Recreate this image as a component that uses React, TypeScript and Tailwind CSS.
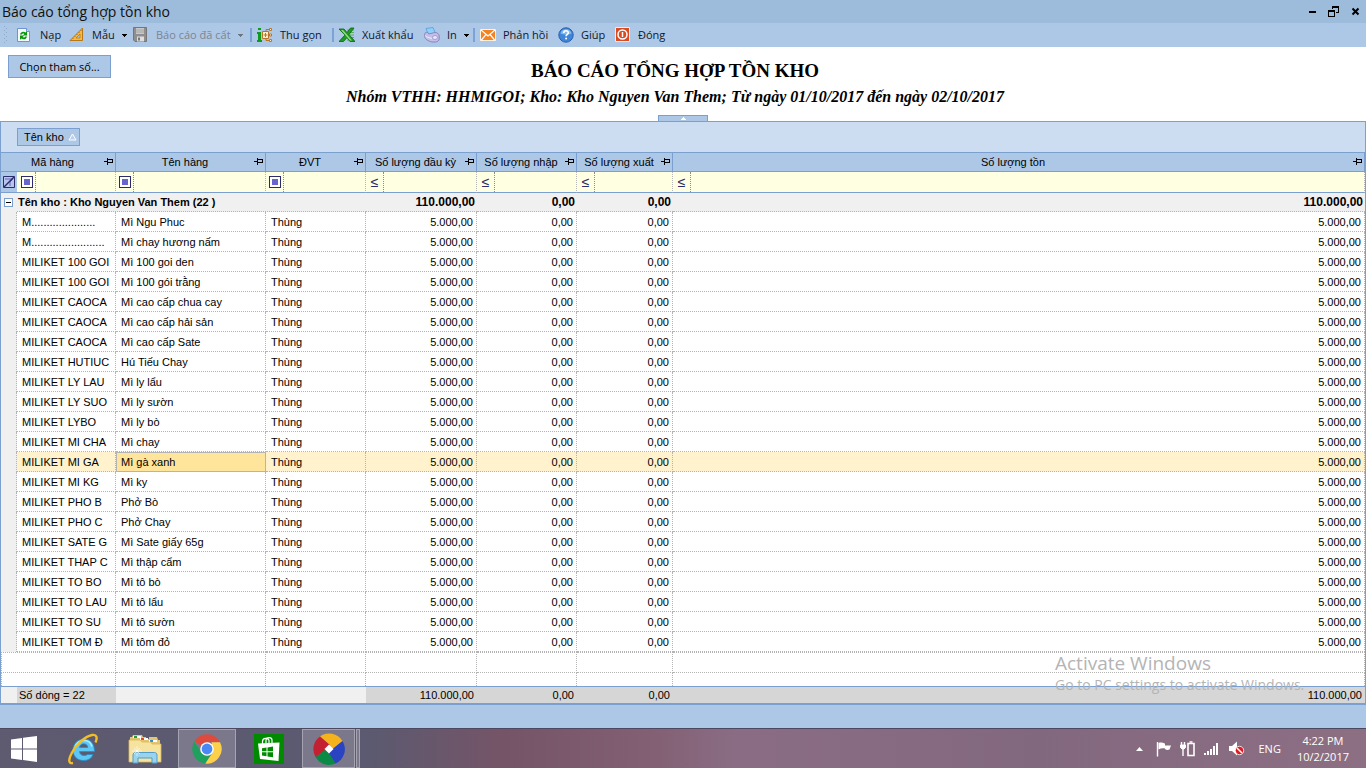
import React from 'react';

type Row = { code: string; name: string };

const rows: Row[] = [
  { code: 'M.....................', name: 'Mì Ngu Phuc' },
  { code: 'M........................', name: 'Mì chay hương nấm' },
  { code: 'MILIKET 100 GOI', name: 'Mì 100 goi den' },
  { code: 'MILIKET 100 GOI', name: 'Mì 100 gói trằng' },
  { code: 'MILIKET CAOCA', name: 'Mì cao cấp chua cay' },
  { code: 'MILIKET CAOCA', name: 'Mì cao cấp hải sản' },
  { code: 'MILIKET CAOCA', name: 'Mì cao cấp Sate' },
  { code: 'MILIKET HUTIUC', name: 'Hú Tiếu Chay' },
  { code: 'MILIKET LY LAU', name: 'Mì ly lẩu' },
  { code: 'MILIKET LY SUO', name: 'Mì ly sườn' },
  { code: 'MILIKET LYBO', name: 'Mì ly bò' },
  { code: 'MILIKET MI CHA', name: 'Mì chay' },
  { code: 'MILIKET MI GA', name: 'Mì gà xanh' },
  { code: 'MILIKET MI KG', name: 'Mì ky' },
  { code: 'MILIKET PHO B', name: 'Phở Bò' },
  { code: 'MILIKET PHO C', name: 'Phở Chay' },
  { code: 'MILIKET SATE G', name: 'Mì Sate giấy 65g' },
  { code: 'MILIKET THAP C', name: 'Mì thập cẩm' },
  { code: 'MILIKET TO BO', name: 'Mì tô bò' },
  { code: 'MILIKET TO LAU', name: 'Mì tô lẩu' },
  { code: 'MILIKET TO SU', name: 'Mì tô sườn' },
  { code: 'MILIKET TOM Đ', name: 'Mì tôm đỏ' },
];

const SELECTED = 12;

const headers = ['Mã hàng', 'Tên hàng', 'ĐVT', 'Số lượng đầu kỳ', 'Số lượng nhập', 'Số lượng xuất', 'Số lượng tồn'];

const Pin = () => (
  <svg width="10" height="8" viewBox="0 0 10 8" className="mr-px shrink-0" shapeRendering="crispEdges">
    <path d="M0 3h3v1H0zM3 0h1v7H3zM4 1h5v1H4zM8 2h1v2H8zM4 4h5v1H4z" fill="#000" />
  </svg>
);

const Caret = ({ className }: { className: string }) => (
  <svg width="5" height="3" viewBox="0 0 5 3" className={className} shapeRendering="crispEdges">
    <path d="M0 0h5v1H0zM1 1h3v1H1zM2 2h1v1H2z" fill="currentColor" />
  </svg>
);

const Separator = () => <span className="h-[14px] w-[2px] shrink-0 bg-[#7ba2d4]" />;

/* Toolbar icons */
const RefreshIcon = () => (
  <svg width="16" height="16" viewBox="0 0 16 16">
    <path d="M.5 1.500h9l3 3v10H.5z" fill="#f4f9ff" stroke="#6f94cf" />
    <path d="M9.500 1.500v3h3" fill="#c8dcf5" stroke="#6f94cf" />
    <path d="M3 7.500C3.500 4.500 7 4 8.500 5.500L10 4.300V8.500H5.800L7.300 7c-1-.8-2-.5-2.500.5z" fill="#0c980c" />
    <path d="M10 9.500c-.5 3-4 3.500-5.500 2L3 12.700V8.500h4.200L5.700 10c1 .8 2 .5 2.500-.5z" fill="#0c980c" />
  </svg>
);

const SquareIcon = () => (
  <svg width="16" height="16" viewBox="0 0 16 16">
    <path d="M13.500 1v12.500H1z" fill="#f5b942" stroke="#b87818" />
    <path d="M11 7v4H7z" fill="#adc7e7" stroke="#b87818" strokeWidth=".8" />
    <path d="M3.500 11l1 1M5.500 9l1 1M7.500 7l1 1M9.500 5l1 1M11.500 3l1 1" stroke="#9a6210" strokeWidth=".8" />
  </svg>
);

const SaveIcon = () => (
  <svg width="16" height="16" viewBox="0 0 16 16">
    <path d="M.5.500h13v14H2l-1.500-1.500z" fill="#8f8f8f" stroke="#767676" />
    <path d="M3 1h8v6H3z" fill="#c9c9c9" />
    <path d="M3 3h8M3 5h8" stroke="#a6a6a6" />
    <path d="M4 9.500h7v5H4z" fill="#dedede" />
    <path d="M5 10.500h2v3H5z" fill="#777" />
  </svg>
);

const CollapseIcon = () => (
  <svg width="16" height="16" viewBox="0 0 16 16" fill="none">
    <path d="M1 1h3v2H1zM0 5h4v8h1v2H0v-2h1V7H0z" fill="#0f9a1e" />
    <path d="M5.500 4.500h6v7h-6z" fill="#fff0c8" stroke="#b8742a" />
    <path d="M8.500 6v4M6.500 8h4M11.500 8h1M9 4V2.500h3M9 12v1.500h3" stroke="#b8742a" />
    <path d="M12.500 1.500h2v2h-2zM12.500 7h2v2h-2zM12.500 12.500h2v2h-2z" fill="#fff0c8" stroke="#b8742a" />
  </svg>
);

const ExcelIcon = () => (
  <svg width="16" height="16" viewBox="0 0 16 16">
    <path d="M8 3h7M8 5.500h7M8 8h7M8 10.500h7M8 13h7" stroke="#5cae5c" />
    <path d="M0 2h5l3 3.500L11.500 1H15l-5 6.500 6 7h-5l-3-4-3.500 4H0l6-6.500z" fill="#1f9a25" stroke="#0b6412" strokeWidth=".8" />
    <path d="M2 3h2l9 10.500h-2z" fill="#8ede78" />
  </svg>
);

const PrinterIcon = () => (
  <svg width="16" height="16" viewBox="0 0 16 16">
    <path d="M2 1.500l7-1 2.500 6-7 1.500z" fill="#8fd0fa" stroke="#5a9ddb" strokeWidth=".8" />
    <path d="M.8 7c0-1.500 1.500-2 3-1.500l1 1.500 6-1.500c2.500 0 4.400 1.500 4.400 3.500v3c0 1.500-2 3-4 3H8C4 14 .8 12 .8 10z" fill="#c4bfe8" stroke="#7c76b4" strokeWidth=".8" />
    <path d="M1 8.500c2 2 4 2 7 3" stroke="#eeecff" fill="none" />
    <ellipse cx="11" cy="10.500" rx="2.500" ry="2" fill="#e9e6fb" stroke="#8e88c4" strokeWidth=".7" />
  </svg>
);

const MailIcon = () => (
  <svg width="16" height="16" viewBox="0 0 16 16">
    <path d="M.5 2.500h15v11H.5z" fill="#f58220" stroke="#fff0dc" />
    <path d="M1 3l7 6 7-6M1 13.500l5-6M15 13.500l-5-6" fill="none" stroke="#fff" strokeWidth="1.200" />
  </svg>
);

const HelpIcon = () => (
  <svg width="16" height="16" viewBox="0 0 16 16">
    <circle cx="8" cy="8" r="7.200" fill="#3f86d8" stroke="#2a5ea8" />
    <path d="M2.500 6.500a5.700 5.700 0 0 1 11 0c-3 1.500-8 1.500-11 0z" fill="#84b8f0" />
    <path d="M5.800 6c0-3 4.600-2.800 4.500-.3 0 1.600-2.200 1.700-2.200 3.500" fill="none" stroke="#fff" strokeWidth="1.600" />
    <circle cx="8.100" cy="11.600" r="1" fill="#fff" />
  </svg>
);

const CloseIcon = () => (
  <svg width="16" height="16" viewBox="0 0 16 16">
    <path d="M.5.500h14v14H.5z" fill="#dc4a20" stroke="#fbe8dc" />
    <circle cx="7.500" cy="7.500" r="4.500" fill="none" stroke="#fff" strokeWidth="1.500" />
    <path d="M7.500 5v5" stroke="#fff" strokeWidth="1.500" />
  </svg>
);

/* Taskbar icons */
const WindowsIcon = () => (
  <svg width="26" height="26" viewBox="0 0 26 26" fill="#fff">
    <path d="M0 3.600L11 2v10.500H0zM12 1.800L26 0v12.500H12zM0 13.500h11V24L0 22.400zM12 13.500h14V26l-14-1.900z" />
  </svg>
);

const IeIcon = () => (
  <svg width="32" height="32" viewBox="0 0 32 32" fill="none">
    <path d="M26 21.500c-1.500 4-5 6-9.500 6-6.500 0-10.500-4.500-10.500-10.500S10.500 6 17 6c6.500 0 10.500 4.500 10.500 12.500H12.500c.3 2.700 2 4 4.500 4 1.500 0 2.700-.3 3.500-1zM12.500 14.500h8.300c-.3-2.500-1.800-3.700-4-3.700s-3.800 1.200-4.300 3.700z" fill="#5cc8f5" stroke="#1f8fd0" strokeWidth=".8" fillRule="evenodd" />
    <path d="M8 15c.5-4.500 4.500-7.500 9-7.500 4 0 7 2.500 8 6" stroke="#b8ecfd" strokeWidth="1.600" />
    <path d="M6 30C1 31 1.500 26 4.500 20.500 8.500 12 18 3.500 25 2c5-1 5.500 3 3.500 7.500" stroke="#f3bf23" strokeWidth="2.400" />
  </svg>
);

const ExplorerIcon = () => (
  <svg width="34" height="30" viewBox="0 0 34 30">
    <path d="M2 3h2l1-2h9l1 2h3v2h3V3h8l1 3h2v22H2z" fill="#e6c66c" />
    <path d="M5 2h8v2H5z" fill="#fff" /><path d="M6 2h3v2H6z" fill="#1ca040" />
    <path d="M12 4h8v2h-8z" fill="#fff" /><path d="M13 4h3v2h-3z" fill="#e04828" />
    <path d="M21 6h8v2h-8z" fill="#fff" /><path d="M22 6h3v2h-3z" fill="#2a8fd8" />
    <path d="M1 6h11l2 2h9l1 2h9v18H1z" fill="#f7e3a0" stroke="#d9b656" strokeWidth=".8" />
    <path d="M5 29v-8c0-1.500 1-2.500 2.500-2.500h19c1.500 0 2.500 1 2.500 2.500v8h-5v-5H10v5z" fill="#9bd3ee" stroke="#4f9dc8" />
    <path d="M9 12v10M4 17h10M6 14l6 6M12 14l-6 6" stroke="#fff" strokeWidth=".6" />
  </svg>
);

const ChromeIcon = () => (
  <svg width="30" height="30" viewBox="0 0 30 30">
    <path d="M15 15L2.300 7.500A14.700 14.700 0 0 1 28 8.300L15 8.300z" fill="#dd4b3e" />
    <path d="M2.300 7.500a14.700 14.700 0 0 0 11 22.100L20.500 18 15 15 9 18z" fill="#1fa15d" />
    <path d="M28 8.300a14.700 14.700 0 0 1-14.700 21.300L21 18l-1.500-9.700z" fill="#fdd04a" />
    <circle cx="15" cy="15" r="6.800" fill="#fff" />
    <circle cx="15" cy="15" r="5.400" fill="#4a89f3" />
  </svg>
);

const StoreIcon = () => (
  <svg width="30" height="30" viewBox="0 0 30 30">
    <path d="M0 0h30v30H0z" fill="#008a00" />
    <path d="M4 9.500l21.500-1L24.500 27 6 25z" fill="#fff" />
    <path d="M8.500 10V7.500c0-4 6-4 6.500-1V9M12 9V6c.5-3.500 6-3 6 0v3" fill="none" stroke="#fff" strokeWidth="1.200" />
    <path d="M8 14.200l4.500-.7v3.800H8zM13.500 13.400l5.500-.8v4.700h-5.500zM8 18.300h4.500v3.900L8 21.600zM13.500 18.300H19v4.900l-5.500-.8z" fill="#008a00" />
  </svg>
);

const BallIcon = () => (
  <svg width="32" height="32" viewBox="0 0 32 32">
    <path d="M7 3.500A15.500 15.500 0 0 1 29.500 8L20 17l-4-5z" fill="#f4b21d" />
    <path d="M29.500 8a15.500 15.500 0 0 1-7 22.500L13.500 20 20 15.500z" fill="#2a43c0" />
    <path d="M22.500 30.500A15.500 15.500 0 0 1 2.500 24l9.500-8 4 4z" fill="#0a8a45" />
    <path d="M2.500 24A15.500 15.500 0 0 1 7 3.500L17 12l-5 5z" fill="#c32032" />
    <path d="M16 11.500l4.500 4.500-4.500 4.500-4.500-4.500z" fill="#fff" />
  </svg>
);

/* Tray icons */
const FlagIcon = () => (
  <svg width="16" height="16" viewBox="0 0 16 16">
    <path d="M1.500 1v14.500" stroke="#fff" strokeWidth="1.400" />
    <path d="M2.500 2C5 1 7 2 9 2.500V4.500h6l-1.500 4c-2 .8-3.500.3-4.500-.5V7.500C6.500 7 4.500 7.500 2.500 8.500z" fill="#fff" />
  </svg>
);

const BatteryIcon = () => (
  <svg width="16" height="16" viewBox="0 0 16 16" fill="none" stroke="#fff">
    <path d="M8 2.500h6v12H8z" strokeWidth="1.600" />
    <path d="M9.500 1h3M1.500 1v3M4.500 1v3M3 7v8" strokeWidth="1.400" />
    <path d="M.5 4h5v2.500L4 8H2L.5 6.500z" fill="#fff" />
  </svg>
);

const SignalIcon = () => (
  <svg width="16" height="12" viewBox="0 0 16 12" fill="#fff">
    <path d="M0 10h2v2H0zM3 8h2v4H3zM6 6h2v6H6zM9 3h2v9H9zM12 0h2v12h-2z" />
  </svg>
);

const SpeakerIcon = () => (
  <svg width="17" height="15" viewBox="0 0 17 15">
    <path d="M1 5h3l5-4.500v14L4 10H1z" fill="#fff" />
    <circle cx="11.500" cy="9.500" r="4.200" fill="#e21b22" stroke="#fff" strokeWidth=".8" />
    <path d="M9 7l5 5" stroke="#fff" strokeWidth="1.500" />
  </svg>
);

const FilterSquare = () => (
  <svg width="12" height="12" viewBox="0 0 12 12" shapeRendering="crispEdges">
    <path d="M.5.500h11v11H.5z" fill="#fff" stroke="#2c2c6c" />
    <path d="M3 3h6v6H3z" fill="#6666cc" />
  </svg>
);

const tools = [
  { label: 'Nạp', icon: <RefreshIcon />, width: 'w-[52px]' },
  { label: 'Mẫu', icon: <SquareIcon />, width: 'w-16', menu: true },
  { label: 'Báo cáo đã cất', icon: <SaveIcon />, width: 'w-[117px]', menu: true, disabled: true, sep: true },
  { label: 'Thu gọn', icon: <CollapseIcon />, width: 'w-[75px]', sep: true },
  { label: 'Xuất khẩu', icon: <ExcelIcon />, width: 'w-[85px]' },
  { label: 'In', icon: <PrinterIcon />, width: 'w-[49px]', menu: true, sep: true },
  { label: 'Phản hồi', icon: <MailIcon />, width: 'w-[78px]' },
  { label: 'Giúp', icon: <HelpIcon />, width: 'w-[57px]' },
  { label: 'Đóng', icon: <CloseIcon />, width: 'w-16' },
];

const cell = 'overflow-hidden whitespace-nowrap border-b border-r border-dotted border-[#b4b4b4] p-0';
const foot = 'h-[17px] border-t border-[#7b9fce] p-0';

const App: React.FC = () => {
  return (
    <div className="flex min-h-screen flex-col bg-[#adc7e7] font-['Liberation_Sans',Arial,sans-serif] text-[11px] leading-4 text-black">
      {/* Title bar */}
      <header className="flex h-[23px] items-center justify-between bg-[#9dbbdb] pl-[2px] pr-[6px]">
        <h1 className="font-['Open_Sans',sans-serif] text-[14px] leading-5 text-[#101010]">Báo cáo tổng hợp tồn kho</h1>
        <div className="flex items-center gap-[11px]">
          <button aria-label="Minimize">
            <svg width="8" height="12" viewBox="0 0 8 12"><path d="M0 5h7v2H0z" /></svg>
          </button>
          <button aria-label="Restore">
            <svg width="12" height="12" viewBox="0 0 12 12" fill="none" stroke="#000" shapeRendering="crispEdges">
              <path d="M4.500 3V1.500h6v5H8M.5 5.500h6v5h-6z" />
              <path d="M4 1h7M0 5h7" strokeWidth="2" />
            </svg>
          </button>
          <button aria-label="Close">
            <svg width="9" height="12" viewBox="0 0 9 12"><path d="M1.500 2.500l6 6M7.500 2.500l-6 6" stroke="#000" strokeWidth="2" /></svg>
          </button>
        </div>
      </header>

      {/* Toolbar */}
      <nav className="flex h-6 items-center pl-1 font-['Open_Sans',sans-serif]">
        <svg width="6" height="20" viewBox="0 0 6 20" fill="#8ea9cb" className="mr-[7px]" shapeRendering="crispEdges">
          <path d="M0 1h1v1H0zM0 5h1v1H0zM0 9h1v1H0zM0 13h1v1H0zM0 17h1v1H0zM2 3h1v1H2zM2 7h1v1H2zM2 11h1v1H2zM2 15h1v1H2z" />
        </svg>
        {tools.map((t) => (
          <React.Fragment key={t.label}>
            <button
              disabled={t.disabled}
              className={`flex h-full shrink-0 items-center gap-[7px] whitespace-nowrap text-[11px] ${t.width} ${t.disabled ? 'text-[#7d8590]' : 'text-[#101828]'}`}
            >
              {t.icon}
              <span>{t.label}</span>
              {t.menu && <Caret className={t.disabled ? 'text-[#6c7480]' : 'text-black'} />}
            </button>
            {t.sep && <span className="flex w-[7px] shrink-0"><Separator /></span>}
          </React.Fragment>
        ))}
      </nav>

      {/* Report heading */}
      <section className="grid bg-white">
        <div className="col-start-1 row-start-1 px-2 pt-2">
          <button className="h-[23px] w-[103px] border border-[#7b9fce] bg-[#adc7e7] font-['Open_Sans',sans-serif]">Chọn tham số...</button>
        </div>
        <div className="col-start-1 row-start-1 mx-auto pr-4 pt-3 text-center font-['Liberation_Serif','Times_New_Roman',serif]">
          <h2 className="text-[19px] font-bold leading-6">BÁO CÁO TỔNG HỢP TỒN KHO</h2>
          <p className="pt-1 text-[16px] font-bold italic leading-5">
            Nhóm VTHH: HHMIGOI; Kho: Kho Nguyen Van Them; Từ ngày 01/10/2017 đến ngày 02/10/2017
          </p>
        </div>
        <button aria-label="Thu gọn tham số" className="col-start-1 row-start-2 mx-auto mt-2 flex h-[6px] w-[50px] items-center justify-center border border-b-0 border-[#7b9fce] bg-[#adc7e7]">
          <svg width="5" height="3" viewBox="0 0 5 3" fill="#fff"><path d="M2 0h1v1H2zM1 1h3v1H1zM0 2h5v1H0z" /></svg>
        </button>
      </section>

      {/* Data grid */}
      <main className="relative border-b-2 border-l border-r border-t border-[#7b9fce] bg-white">
        <div className="flex h-[30px] items-center bg-[#ccdcf1] pl-4">
          <button className="flex h-[18px] w-[63px] items-center gap-1 border border-[#7b9fce] bg-[#adc7e7] pl-[6px]">
            Tên kho
            <svg width="9" height="8" viewBox="0 0 9 8"><path d="M4.500 1L8 7H1z" fill="#bccfe6" stroke="#fff" /></svg>
          </button>
        </div>

        <table className="w-full table-fixed border-separate border-spacing-0">
          <colgroup>
            <col className="w-4" />
            <col className="w-[99px]" />
            <col className="w-[150px]" />
            <col className="w-[100px]" />
            <col className="w-[111px]" />
            <col className="w-[100px]" />
            <col className="w-[96px]" />
            <col />
          </colgroup>
          <thead>
            <tr>
              {headers.map((h, i) => (
                <th key={h} colSpan={i === 0 ? 2 : 1} className="h-5 border-b border-r border-t border-[#7b9fce] bg-[#adc7e7] p-0 font-normal">
                  <div className="flex items-center">
                    <span className="flex-1 whitespace-nowrap">{h}</span>
                    <Pin />
                  </div>
                </th>
              ))}
            </tr>
            <tr>
              <td className="h-[21px] border-b border-[#7b9fce] bg-[#adc7e7] p-0">
                <button aria-label="Xóa bộ lọc" className="flex pl-[2px]">
                  <svg width="12" height="12" viewBox="0 0 12 12" fill="none" stroke="#2c2c6c">
                    <path d="M.5.500h11v11H.5z" fill="#b8c6ee" />
                    <path d="M2 3h8L7 6v4" stroke="#5a68c0" />
                    <path d="M1 11L11 1" strokeWidth="1.500" />
                  </svg>
                </button>
              </td>
              {headers.map((h, i) => (
                <td key={h} className="h-[21px] border-b border-r border-b-[#7b9fce] border-r-[#b4b4b4] bg-[#ffffe1] p-0 [border-right-style:dotted]">
                  <div className="flex h-5">
                    <button aria-label={`Điều kiện lọc ${h}`} className={`flex h-5 shrink-0 items-center border-r border-dotted border-[#8c8c8c] ${i === 0 ? 'w-[19px] pl-1' : 'w-[18px] justify-center'}`}>
                      {i < 3 ? <FilterSquare /> : <span className="text-[14px] text-[#2c2c6c]">≤</span>}
                    </button>
                    <input aria-label={`Lọc ${h}`} className="w-full min-w-0 bg-transparent px-1 outline-none" />
                  </div>
                </td>
              ))}
            </tr>
          </thead>
          <tbody>
            <tr className="bg-[#f0f0f0] text-[12px] font-bold">
              <td className="h-[19px] p-0">
                <button aria-label="Thu gọn nhóm" className="ml-[3px] flex h-[9px] w-[9px] items-center justify-center border border-[#7b9fce] bg-white">
                  <span className="h-px w-[5px] bg-black" />
                </button>
              </td>
              <td colSpan={3} className="h-[19px] border-b border-dotted border-[#b4b4b4] p-0 pl-px text-[11px]">Tên kho : Kho Nguyen Van Them (22 )</td>
              {['110.000,00', '0,00', '0,00', '110.000,00'].map((v, i) => (
                <td key={i} className="h-[19px] border-b border-dotted border-[#b4b4b4] p-0 pr-[2px] text-right">{v}</td>
              ))}
            </tr>
            {rows.map((r, i) => (
              <tr key={i} className={i === SELECTED ? 'bg-[#fff2cc]' : 'bg-white'}>
                <td className="h-5 border-r border-dotted border-[#b4b4b4] bg-[#f0f0f0] p-0" />
                <td className={`${cell} h-5 pl-[5px]`}>{r.code}</td>
                <td className={`${cell} h-5 pl-[5px] ${i === SELECTED ? 'bg-[#ffe49c] outline outline-1 -outline-offset-1 outline-[#b4b4b4]' : ''}`}>{r.name}</td>
                <td className={`${cell} h-5 pl-[5px]`}>Thùng</td>
                <td className={`${cell} h-5 pr-[3px] text-right`}>5.000,00</td>
                <td className={`${cell} h-5 pr-[3px] text-right`}>0,00</td>
                <td className={`${cell} h-5 pr-[3px] text-right`}>0,00</td>
                <td className={`${cell} h-5 pr-[3px] text-right`}>5.000,00</td>
              </tr>
            ))}
            <tr>
              {headers.map((h, i) => (
                <td key={h} colSpan={i === 0 ? 2 : 1} className={`${cell} h-[21px] ${i === 0 ? 'border-l' : ''} border-t`} />
              ))}
            </tr>
            <tr>
              {headers.map((h, i) => (
                <td key={h} colSpan={i === 0 ? 2 : 1} className={`h-[13px] border-r border-dotted border-[#b4b4b4] p-0 ${i === 0 ? 'border-l' : ''}`} />
              ))}
            </tr>
          </tbody>
          <tfoot>
            <tr className="bg-[#f0f0f0]">
              <td className={foot} />
              <td className={`${foot} bg-[#d6d6d6] pl-[2px]`}>Số dòng = 22</td>
              <td className={foot} />
              <td className={foot} />
              {['110.000,00', '0,00', '0,00', '110.000,00'].map((v, i) => (
                <td key={i} className={`${foot} bg-[#d6d6d6] pr-[3px] text-right`}>{v}</td>
              ))}
            </tr>
          </tfoot>
        </table>

        {/* Activation watermark */}
        <div className="pointer-events-none absolute bottom-2 right-0 w-[310px] whitespace-nowrap font-['Open_Sans',sans-serif] text-[#b4b4b4]">
          <p className="text-[19px] leading-6">Activate Windows</p>
          <p className="text-[14px] leading-5">Go to PC settings to activate Windows.</p>
        </div>
      </main>

      <div className="min-h-[23px] flex-1" />

      {/* Taskbar */}
      <footer className="flex h-10 items-center justify-between border-t border-[#4c4860] bg-[linear-gradient(90deg,#5e5a70_0%,#5b5a70_27%,#765467_37%,#836074_48%,#8a6d84_54%,#82687f_76%,#8d6f83_100%)] font-['Open_Sans',sans-serif] text-white">
        <div className="flex h-full items-center gap-1">
          <button aria-label="Start" className="flex w-[50px] pl-[11px]"><WindowsIcon /></button>
          <button aria-label="Internet Explorer" className="flex w-[58px] justify-center"><IeIcon /></button>
          <button aria-label="File Explorer" className="flex w-[58px] justify-center"><ExplorerIcon /></button>
          <button aria-label="Google Chrome" className="flex h-full w-[58px] items-center justify-center border border-[#a5a2b2] bg-[#7c788c]"><ChromeIcon /></button>
          <button aria-label="Store" className="flex w-[58px] justify-center"><StoreIcon /></button>
          <div className="flex h-full gap-px">
            <button aria-label="MISA" className="flex h-full w-[53px] items-center justify-center border border-[#a5a2b2] bg-[#7c788c]"><BallIcon /></button>
            <span className="h-full w-1 border border-[#a5a2b2] bg-[#7c788c]" />
          </div>
        </div>
        <div className="flex items-center pr-[17px]">
          <button aria-label="Show hidden icons" className="pr-[13px]">
            <svg width="7" height="4" viewBox="0 0 7 4" fill="#fff"><path d="M3.500 0L7 4H0z" /></svg>
          </button>
          <div className="flex items-center gap-2">
            <FlagIcon />
            <BatteryIcon />
            <SignalIcon />
            <SpeakerIcon />
          </div>
          <span className="pl-[13px] text-[11px]">ENG</span>
          <p className="pl-4 text-center text-[11px] leading-4">4:22 PM<br />10/2/2017</p>
        </div>
      </footer>
    </div>
  );
};

export default App;
